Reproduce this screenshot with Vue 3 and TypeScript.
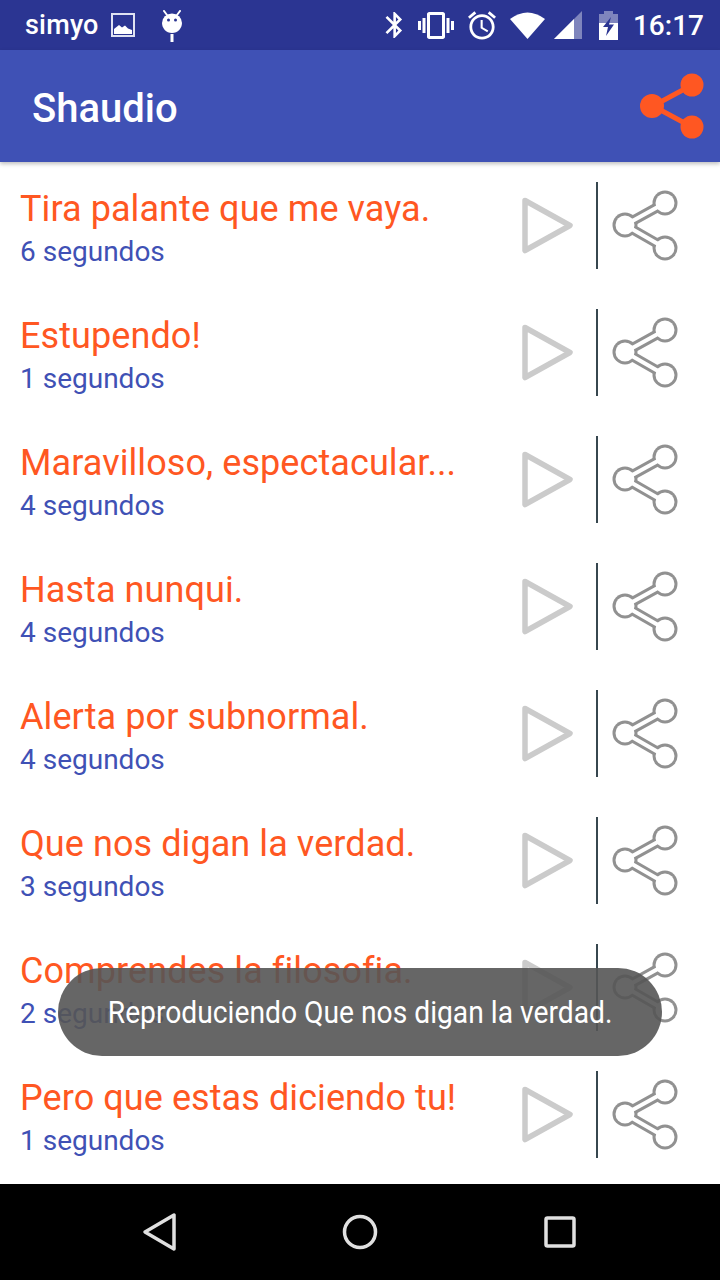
<template>
  <div class="screen">
    <div class="status-bar">
      <span class="carrier">simyo</span>
      <svg class="st-photo" width="24" height="24" viewBox="0 0 24 24">
        <rect x="1" y="1" width="22" height="22" fill="none" stroke="#dfe2f2" stroke-width="2" />
        <path d="M3 21 V16 L8 12 L11 14.5 L14 12.5 L17 15.5 L21 17 V21 Z" fill="#fff" />
      </svg>
      <svg class="st-android" width="20" height="32" viewBox="0 0 20 32">
        <path d="M2 1 L5 5 M18 1 L15 5" stroke="#fff" stroke-width="2" stroke-linecap="round" />
        <path d="M0 13 A10 9.5 0 0 1 20 13 C20 18 16 23 10 23 C4 23 0 18 0 13 Z" fill="#fff" />
        <circle cx="6.5" cy="10" r="1.5" fill="#2b3592" />
        <circle cx="13.5" cy="10" r="1.5" fill="#2b3592" />
        <rect x="8.5" y="24" width="3" height="8" fill="#fff" />
      </svg>
      <div class="status-right">
        <svg class="ic-bt" width="20" height="26" viewBox="5 2 13 20">
          <path fill="#fff" d="M17.71 7.71L12 2h-1v7.59L6.41 5 5 6.41 10.59 12 5 17.59 6.41 19 11 14.41V22h1l5.71-5.71-4.3-4.29 4.3-4.29zM13 5.83l1.88 1.88L13 9.59V5.83zm1.88 10.46L13 18.17v-3.76l1.88 1.88z" />
        </svg>
        <svg class="ic-vib" width="36" height="27" viewBox="0 3 24 18">
          <path fill="#fff" d="M0 15h2V9H0v6zm3 2h2V7H3v10zm19-8v6h2V9h-2zm-3 8h2V7h-2v10zM16.5 3h-9C6.67 3 6 3.67 6 4.5v15c0 .83.67 1.5 1.5 1.5h9c.83 0 1.5-.67 1.5-1.5v-15c0-.83-.67-1.5-1.5-1.5zM16 19H8V5h8v14z" />
        </svg>
        <svg class="ic-alarm" width="28" height="29" viewBox="2 1.8 20 20.4">
          <path fill="#fff" d="M22 5.72l-4.6-3.86-1.29 1.53 4.6 3.86L22 5.72zM7.88 3.39L6.6 1.86 2 5.71l1.29 1.53 4.59-3.85zM12.5 8H11v6l4.75 2.85.75-1.23-4-2.37V8zM12 4c-4.97 0-9 4.03-9 9s4.03 9 9 9c4.97 0 9-4.03 9-9s-4.03-9-9-9zm0 16c-3.87 0-7-3.13-7-7s3.13-7 7-7 7 3.13 7 7-3.13 7-7 7z" />
        </svg>
        <svg class="ic-wifi" width="35" height="28" viewBox="0 0 35 28">
          <path d="M0 8 Q17.5 -5 35 8 L17.5 28 Z" fill="#fff" />
        </svg>
        <svg class="ic-signal" width="28" height="28" viewBox="0 0 28 28">
          <path d="M0 28 L28 0 V28 Z" fill="#fff" opacity="0.4" />
          <path d="M0 28 L20 8 V28 Z" fill="#fff" />
        </svg>
        <svg class="ic-batt" width="19" height="29" viewBox="0 0 19 29">
          <path d="M5 0 H14 V3 H19 V12 H0 V3 H5 Z" fill="#fff" opacity="0.4" />
          <path d="M0 12 H19 V29 H0 Z" fill="#fff" />
          <path d="M12 6 L4 16 H9 L7 25 L15 13.5 H10 Z" fill="#2b3592" />
        </svg>
        <span class="clock">16:17</span>
      </div>
    </div>

    <header class="app-bar">
      <h1 class="app-title">Shaudio</h1>
      <svg width="66" height="66" viewBox="0 0 66 66">
        <path d="M53 12 L14 33 L53 54" fill="none" stroke="#ff5722" stroke-width="5" />
        <circle cx="53" cy="12" r="11.5" fill="#ff5722" />
        <circle cx="13" cy="33" r="12" fill="#ff5722" />
        <circle cx="53" cy="54" r="11.5" fill="#ff5722" />
      </svg>
    </header>

    <main class="list">
      <div v-for="sound in sounds" :key="sound.title" class="row">
        <div class="row-text">
          <div class="row-title">{{ sound.title }}</div>
          <div class="row-sub">{{ sound.seconds }} segundos</div>
        </div>
        <svg class="play" width="58" height="62" viewBox="0 0 58 62">
          <path d="M7 5.5 L52 30.5 L7 55.5 Z" fill="none" stroke="#cbcbcb" stroke-width="5.5" stroke-linejoin="round" />
        </svg>
        <div class="divider"></div>
        <svg class="share" width="70" height="72" viewBox="0 0 70 72">
          <path d="M53 13 L13 35 L53 58" fill="none" stroke="#919191" stroke-width="10" />
          <circle cx="53" cy="13" r="12.5" fill="#919191" />
          <circle cx="13" cy="35" r="12.5" fill="#919191" />
          <circle cx="53" cy="58" r="12.5" fill="#919191" />
          <path d="M53 13 L13 35 L53 58" fill="none" stroke="#fff" stroke-width="4" />
          <circle cx="53" cy="13" r="9.5" fill="#fff" />
          <circle cx="13" cy="35" r="9.5" fill="#fff" />
          <circle cx="53" cy="58" r="9.5" fill="#fff" />
        </svg>
      </div>
    </main>

    <nav class="nav-bar">
      <svg width="40" height="40" viewBox="0 0 40 40">
        <path d="M34 3 V37 L5 20 Z" fill="none" stroke="#e0e0e0" stroke-width="3.5" stroke-linejoin="round" />
      </svg>
      <svg width="40" height="40" viewBox="0 0 40 40">
        <circle cx="20" cy="20" r="15.5" fill="none" stroke="#e0e0e0" stroke-width="3.5" />
      </svg>
      <svg width="40" height="40" viewBox="0 0 40 40">
        <rect x="6" y="6" width="28" height="28" rx="1.5" fill="none" stroke="#e0e0e0" stroke-width="3.5" />
      </svg>
    </nav>

    <div class="toast"><span class="toast-text">Reproduciendo Que nos digan la verdad.</span></div>
  </div>
</template>

<script setup lang="ts">
const sounds = [
  { title: 'Tira palante que me vaya.', seconds: 6 },
  { title: 'Estupendo!', seconds: 1 },
  { title: 'Maravilloso, espectacular...', seconds: 4 },
  { title: 'Hasta nunqui.', seconds: 4 },
  { title: 'Alerta por subnormal.', seconds: 4 },
  { title: 'Que nos digan la verdad.', seconds: 3 },
  { title: 'Comprendes la filosofia.', seconds: 2 },
  { title: 'Pero que estas diciendo tu!', seconds: 1 },
]
</script>

<style>
html,
body {
  margin: 0;
  background: #fff;
}
</style>

<style scoped>
.screen {
  position: relative;
  width: 720px;
  height: 1280px;
  display: flex;
  flex-direction: column;
  overflow: hidden;
  background: #fff;
  font-family: Roboto, sans-serif;
}

.status-bar {
  height: 50px;
  flex-shrink: 0;
  display: flex;
  align-items: center;
  padding: 0 16px 0 25px;
  background: #2b3592;
  color: #fff;
}

.carrier {
  font-size: 27px;
  font-weight: 500;
  letter-spacing: 0.2px;
}

.st-photo {
  margin-left: 12px;
}

.st-android {
  margin-left: 27px;
  margin-top: 1px;
}

.status-right {
  margin-left: auto;
  display: flex;
  align-items: center;
}

.ic-vib,
.ic-alarm,
.ic-wifi {
  margin-left: 14px;
}

.ic-signal {
  margin-left: 9px;
}

.ic-batt {
  margin-left: 17px;
}

.clock {
  margin-left: 15px;
  font-size: 28px;
  font-weight: 500;
}

.app-bar {
  height: 112px;
  flex-shrink: 0;
  display: flex;
  align-items: center;
  justify-content: space-between;
  padding: 0 15px 0 32px;
  background: #3f51b5;
  box-shadow: 0 2px 4px rgba(0, 0, 0, 0.25);
  z-index: 1;
}

.app-title {
  margin: 4px 0 0;
  font-size: 40px;
  font-weight: 500;
  color: #fff;
}

.list {
  flex: 1;
  min-height: 0;
  padding-top: 20px;
}

.row {
  height: 87px;
  margin-bottom: 40px;
  display: flex;
  align-items: center;
  padding-left: 20px;
}

.row-text {
  flex: 1;
  min-width: 0;
  padding-top: 7px;
}

.row-title {
  font-size: 36px;
  line-height: 44px;
  letter-spacing: 0.08px;
  color: #ff5722;
  white-space: nowrap;
}

.row-sub {
  font-size: 28px;
  line-height: 41px;
  color: #3f51b5;
}

.play {
  flex-shrink: 0;
  margin-right: 20px;
}

.divider {
  flex-shrink: 0;
  width: 2px;
  height: 87px;
  background: #37474f;
}

.share {
  flex-shrink: 0;
  margin-left: 14px;
  margin-right: 38px;
}

.nav-bar {
  height: 96px;
  flex-shrink: 0;
  display: flex;
  align-items: center;
  justify-content: center;
  gap: 160px;
  background: #000;
}

.toast {
  position: absolute;
  left: 58px;
  top: 968px;
  width: 604px;
  height: 88px;
  display: flex;
  align-items: center;
  justify-content: center;
  border-radius: 44px;
  background: rgba(85, 85, 85, 0.9);
  color: #fff;
  font-size: 32px;
  white-space: nowrap;
}

.toast-text {
  display: inline-block;
  transform: scaleX(0.882);
}
</style>
